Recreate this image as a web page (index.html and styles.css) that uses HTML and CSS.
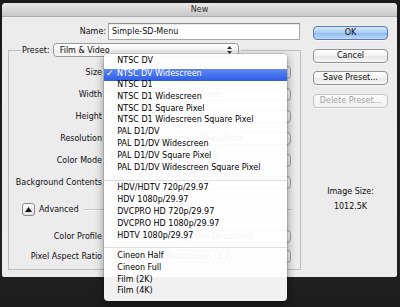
FILE: index.html
```html
<!DOCTYPE html>
<html>
<head>
  <meta charset="utf-8">
  <title>New</title>
  <meta name="viewport" content="width=device-width, initial-scale=1">
  <link rel="stylesheet" href="styles.css">
</head>
<body>
  <div class="window">
    <div class="titlebar">New</div>
    <div class="dialog">
      <div class="main">
        <div class="name-row">
          <span class="lbl">Name:</span>
          <div class="textbox name-box">Simple-SD-Menu</div>
        </div>
        <fieldset class="group">
          <legend>
            <div class="preset">
              <span>Preset:</span>
              <div class="popup preset-pop">Film &amp; Video
                <svg class="arrows" width="5" height="8" viewBox="0 0 5 8"><polygon points="0,3 2.5,0 5,3"/><polygon points="0,5 2.5,8 5,5"/></svg>
              </div>
            </div>
          </legend>
          <div class="fields">
            <div class="row"><span class="lbl">Size</span><div class="popup wide"></div></div>
            <div class="row"><span class="lbl">Width</span><div class="textbox num">720</div><div class="popup unit">Pixels</div></div>
            <div class="row"><span class="lbl">Height</span><div class="textbox num">480</div><div class="popup unit">Pixels</div></div>
            <div class="row"><span class="lbl">Resolution</span><div class="textbox num">72</div><div class="popup unit">Pixels/Inch</div></div>
            <div class="row"><span class="lbl">Color Mode</span><div class="popup num">RGB Color</div><div class="popup unit">8 bit</div></div>
            <div class="row"><span class="lbl">Background Contents</span><div class="popup wide">White</div></div>
          </div>
          <div class="advanced">
            <div class="disclosure">
              <svg width="7" height="5" viewBox="0 0 7 5"><polygon points="0,5 3.5,0 7,5"/></svg>
            </div>
            <span class="adv-text">Advanced</span>
            <span class="rule"></span>
          </div>
          <div class="more">
            <div class="row"><span class="lbl">Color Profile</span><div class="popup wide">Don't Color Manage this Document</div></div>
            <div class="row"><span class="lbl">Pixel Aspect Ratio</span><div class="popup wide">D1/DV NTSC Widescreen (1.2)</div></div>
          </div>
        </fieldset>
      </div>
      <div class="side">
        <div class="btn default">OK</div>
        <div class="btn">Cancel</div>
        <div class="btn">Save Preset...</div>
        <div class="btn disabled">Delete Preset...</div>
        <div class="image-size">
          <p>Image Size:</p>
          <p>1012.5K</p>
        </div>
      </div>
    </div>
  </div>

  <ul class="menu">
    <li>NTSC DV</li>
    <li class="selected">NTSC DV Widescreen</li>
    <li>NTSC D1</li>
    <li>NTSC D1 Widescreen</li>
    <li>NTSC D1 Square Pixel</li>
    <li>NTSC D1 Widescreen Square Pixel</li>
    <li>PAL D1/DV</li>
    <li>PAL D1/DV Widescreen</li>
    <li>PAL D1/DV Square Pixel</li>
    <li>PAL D1/DV Widescreen Square Pixel</li>
    <li class="sep"></li>
    <li>HDV/HDTV 720p/29.97</li>
    <li>HDV 1080p/29.97</li>
    <li>DVCPRO HD 720p/29.97</li>
    <li>DVCPRO HD 1080p/29.97</li>
    <li>HDTV 1080p/29.97</li>
    <li class="sep"></li>
    <li>Cineon Half</li>
    <li>Cineon Full</li>
    <li>Film (2K)</li>
    <li>Film (4K)</li>
  </ul>
</body>
</html>
```

FILE: styles.css
```css
html {
  font-family: "DejaVu Sans", Verdana, sans-serif;
  font-size: 8px;
  color: #0d0d0d;
}
body {
  margin: 0;
  height: 307px;
  overflow: hidden;
  position: relative;
  background: linear-gradient(#1a1a1a, #222 85%, #1c1c1c);
}
.window {
  width: 395px;
  height: 274px;
  margin: 3px 0 0 2px;
  background-color: #ececec;
  border-radius: 4px 4px 2px 2px;
  overflow: hidden;
}
.titlebar {
  height: 14px;
  line-height: 14px;
  box-sizing: border-box;
  text-align: center;
  color: #2a2a2a;
  background: linear-gradient(#e9e9e9, #c8c8c8);
  border-bottom: 1px solid #adadad;
}
.dialog {
  display: flex;
}
.main {
  width: 305px;
  padding: 6px 0 0 6px;
  box-sizing: border-box;
}
.name-row {
  display: flex;
  align-items: center;
  height: 17px;
}
.name-row .lbl {
  width: 98px;
  margin-right: 2px;
  text-align: right;
}
.textbox {
  box-sizing: border-box;
  background-color: #fff;
  border: 1px solid #a6a6a6;
  border-top-color: #8e8e8e;
  box-shadow: inset 0 1px 1px rgba(0,0,0,.1);
}
.name-box {
  width: 192px;
  height: 17px;
  line-height: 15px;
  padding-left: 3px;
}
.group {
  width: 293px;
  min-width: 0;
  margin: 3px 0 0;
  padding: 0 0 6px;
  box-sizing: border-box;
  border: 1px solid #bdbdbd;
}
.group legend {
  margin-left: 12px;
  padding: 0 2px 0 1px;
}
.preset {
  display: flex;
  align-items: center;
  height: 14px;
}
.popup {
  display: flex;
  align-items: center;
  box-sizing: border-box;
  height: 13px;
  padding: 0 6px;
  border: 1px solid #9f9f9f;
  border-radius: 4px;
  background: linear-gradient(#ffffff, #f6f6f6 50%, #ececec 51%, #f7f7f7);
}
.preset-pop {
  width: 186px;
  height: 14px;
  margin-left: 3px;
  border-color: #999;
}
.arrows {
  margin-left: auto;
  fill: #333;
}
.fields {
  display: flex;
  flex-direction: column;
  gap: 9px;
  padding-top: 9px;
}
.row {
  display: flex;
  align-items: center;
  height: 13px;
}
.row .lbl {
  flex: none;
  width: 93px;
  margin-right: 4px;
  text-align: right;
  white-space: nowrap;
}
.wide {
  width: 185px;
}
.num {
  width: 80px;
  height: 13px;
  padding-left: 3px;
  line-height: 11px;
}
.unit {
  width: 98px;
  margin-left: 7px;
}
.advanced {
  display: flex;
  align-items: center;
  height: 13px;
  margin-top: 14px;
  padding-left: 13px;
}
.disclosure {
  display: flex;
  align-items: center;
  justify-content: center;
  width: 13px;
  height: 13px;
  box-sizing: border-box;
  border: 1px solid #8a8a8a;
  border-radius: 3px;
  background: linear-gradient(#ffffff, #e2e2e2);
}
.disclosure svg {
  fill: #111;
}
.adv-text {
  margin-left: 4px;
}
.rule {
  flex: 1;
  height: 1px;
  margin: 0 8px 0 5px;
  background-color: #c6c6c6;
  border-bottom: 1px solid #f8f8f8;
}
.more {
  display: flex;
  flex-direction: column;
  gap: 7px;
  margin-top: 14px;
}
.side {
  display: flex;
  flex-direction: column;
  gap: 8.5px;
  width: 75px;
  margin-left: 6px;
  padding-top: 9px;
}
.btn {
  height: 14px;
  line-height: 12px;
  box-sizing: border-box;
  text-align: center;
  border: 1px solid #939393;
  border-radius: 4px;
  background: linear-gradient(#ffffff, #f3f3f3 50%, #e7e7e7 51%, #f6f6f6);
  box-shadow: 0 1px 0 rgba(255,255,255,.6);
}
.btn.default {
  border-color: #5a79ad;
  background: linear-gradient(#d6e8fc, #a9cbf3 50%, #8fbaee 51%, #bcdaf9);
}
.btn.disabled {
  color: #a2a2a2;
  border-color: #c4c4c4;
  background: linear-gradient(#fbfbfb, #f0f0f0);
}
.image-size {
  margin-top: 68px;
  text-align: center;
  line-height: 15px;
}
.image-size p {
  margin: 0;
}

.menu {
  position: absolute;
  left: 104px;
  top: 54px;
  width: 183px;
  margin: 0;
  padding: 3px 0 2px;
  list-style: none;
  color: #000;
  background-color: rgba(255,255,255,.94);
  border-radius: 4px;
  box-shadow: 0 3px 10px rgba(0,0,0,.45), 0 0 0 1px rgba(0,0,0,.1);
}
.menu li {
  height: 8.9px;
  line-height: 8.9px;
  padding: 0 0 3px 13.3px;
  white-space: nowrap;
}
.menu li.selected {
  color: #fff;
  background: linear-gradient(#5f88f1, #2c5ce8);
}
.menu li.selected::before {
  content: "\2713";
  display: inline-block;
  width: 11px;
  margin-left: -11.3px;
  font-size: 9px;
  font-weight: bold;
}
.menu li.sep {
  height: 8.2px;
  padding: 0;
  position: relative;
}
.menu li.sep::after {
  content: "";
  position: absolute;
  left: 0;
  right: 0;
  top: 3.6px;
  height: 1px;
  background-color: #dedede;
}
```
